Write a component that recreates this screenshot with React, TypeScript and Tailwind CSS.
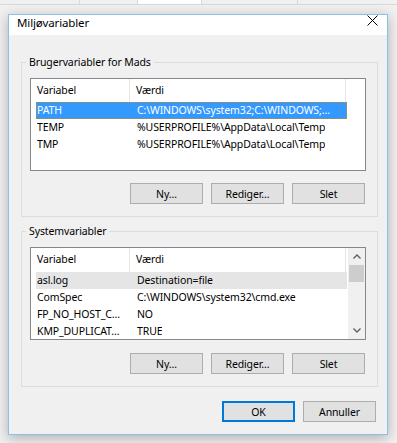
import { ReactNode } from 'react';

interface Row {
  name: string;
  value: string;
}

const userVars: Row[] = [
  { name: 'PATH', value: 'C:\\WINDOWS\\system32;C:\\WINDOWS;…' },
  { name: 'TEMP', value: '%USERPROFILE%\\AppData\\Local\\Temp' },
  { name: 'TMP', value: '%USERPROFILE%\\AppData\\Local\\Temp' },
];

const systemVars: Row[] = [
  { name: 'asl.log', value: 'Destination=file' },
  { name: 'ComSpec', value: 'C:\\WINDOWS\\system32\\cmd.exe' },
  { name: 'FP_NO_HOST_C…', value: 'NO' },
  { name: 'KMP_DUPLICAT…', value: 'TRUE' },
];

function Button({ label, focused }: { label: string; focused?: boolean }) {
  return (
    <button
      className={
        focused
          ? 'w-[73px] h-[21px] bg-[#e1e1e1] border-2 border-[#0078d7] leading-[16px] text-black'
          : 'w-[73px] h-[21px] bg-[#e1e1e1] border border-[#adadad] leading-[16px] text-black'
      }
    >
      {label}
    </button>
  );
}

function Group({ title, children }: { title: string; children: ReactNode }) {
  return (
    <fieldset className="w-[357px] border border-[#dcdcdc] pb-[12px]">
      <legend className="ml-[4px] px-[3px] leading-[16px]">{title}</legend>
      {children}
    </fieldset>
  );
}

function Header({ height }: { height: string }) {
  return (
    <div className={`flex ${height}`}>
      <div className="w-[99px] pl-[6px] border-r border-[#e5e5e5] flex items-center">Variabel</div>
      <div className="w-[216px] pl-[6px] border-r border-[#e5e5e5] flex items-center">Værdi</div>
    </div>
  );
}

function Chevron({ up }: { up?: boolean }) {
  return (
    <svg width="8" height="5" viewBox="0 0 8 5" className="block">
      <path
        d={up ? 'M0.5 4.5 L4 1 L7.5 4.5' : 'M0.5 0.5 L4 4 L7.5 0.5'}
        fill="none"
        stroke="#606060"
        strokeWidth="1.4"
      />
    </svg>
  );
}

export default function App() {
  return (
    <div className="w-[397px] h-[443px] overflow-hidden bg-[#f0f0f0] text-[10.5px] tracking-[-0.12px] text-black font-['Noto_Sans',sans-serif]">
      {/* tabs of the window behind */}
      <div className="flex h-[5px] border-b border-[#d9d9d9]">
        <div className="w-[80px] border-r border-[#d9d9d9] bg-[#f0f0f0]" />
        <div className="w-[58px] border-r border-[#d9d9d9] bg-[#f0f0f0]" />
        <div className="w-[64px] border-r border-[#d9d9d9] bg-white" />
        <div className="w-[96px] border-r border-[#d9d9d9] bg-[#f0f0f0]" />
        <div className="flex-1 bg-[#f0f0f0]" />
      </div>

      <div className="ml-[8px] mt-[9px] w-[380px] h-[421px] border border-[#8ac1ec] bg-[#f0f0f0] flex flex-col shadow-[0_3px_12px_rgba(0,0,0,0.28)]">
        <div className="h-[20px] bg-white flex items-start justify-between pl-[8px] pr-[9px]">
          <span className="text-[11.5px] leading-[14px] pt-[1px]">Miljøvariabler</span>
          <svg width="11" height="11" viewBox="0 0 11 11">
            <path d="M0.5 0.5 L10.5 10.5 M10.5 0.5 L0.5 10.5" stroke="#000" strokeWidth="1" />
          </svg>
        </div>

        <div className="flex-1 pl-[12px] pt-[19px]">
          <Group title="Brugervariabler for Mads">
            <div className="ml-[8px] mt-[8px] w-[336px] h-[93px] bg-white border border-[#828790]">
              <Header height="h-[23px]" />
              {userVars.map((r, i) => (
                <div
                  key={r.name}
                  className={
                    i === 0
                      ? 'ml-[5px] w-[311px] h-[17px] flex items-center bg-[#3399ff] text-white border border-dotted border-[#d08a10]'
                      : 'ml-[5px] w-[311px] h-[17px] flex items-center border border-transparent'
                  }
                >
                  <span className="w-[100px] whitespace-nowrap overflow-hidden">{r.name}</span>
                  <span className="whitespace-nowrap overflow-hidden">{r.value}</span>
                </div>
              ))}
            </div>
            <div className="mt-[12px] pr-[12px] flex justify-end gap-[8px]">
              <Button label="Ny…" />
              <Button label="Rediger…" />
              <Button label="Slet" />
            </div>
          </Group>

          <div className="mt-[6px]">
            <Group title="Systemvariabler">
              <div className="ml-[8px] mt-[8px] w-[336px] h-[93px] bg-white border border-[#828790] flex overflow-hidden">
                <div className="w-[317px]">
                  <Header height="h-[24px]" />
                  {systemVars.map((r, i) => (
                    <div
                      key={r.name}
                      className={
                        i === 0
                          ? 'ml-[5px] w-[311px] h-[17px] flex items-center bg-[#e5e5e5] px-[1px]'
                          : 'ml-[5px] w-[311px] h-[17px] flex items-center px-[1px]'
                      }
                    >
                      <span className="w-[100px] whitespace-nowrap overflow-hidden">{r.name}</span>
                      <span className="whitespace-nowrap overflow-hidden">{r.value}</span>
                    </div>
                  ))}
                </div>
                <div className="w-[17px] bg-[#f0f0f0] flex flex-col">
                  <div className="h-[17px] flex items-center justify-center">
                    <Chevron up />
                  </div>
                  <div className="mx-[1px] h-[17px] bg-[#cdcdcd]" />
                  <div className="flex-1" />
                  <div className="h-[17px] flex items-center justify-center">
                    <Chevron />
                  </div>
                </div>
              </div>
              <div className="mt-[13px] pr-[12px] flex justify-end gap-[8px]">
                <Button label="Ny…" />
                <Button label="Rediger…" />
                <Button label="Slet" />
              </div>
            </Group>
          </div>

          <div className="mt-[14px] w-[357px] pr-[2px] flex justify-end gap-[8px]">
            <Button label="OK" focused />
            <Button label="Annuller" />
          </div>
        </div>
      </div>
    </div>
  );
}
